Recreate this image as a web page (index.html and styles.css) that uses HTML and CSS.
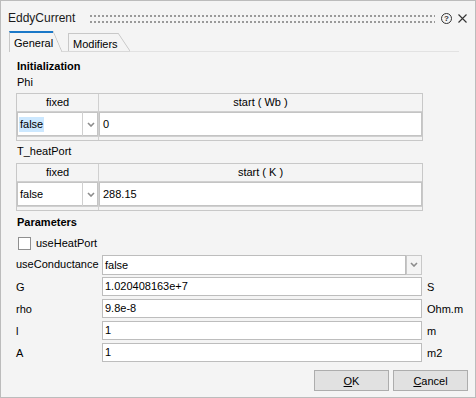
FILE: index.html
```html
<!DOCTYPE html>
<html lang="en">
  <head>
    <meta charset="UTF-8" />
    <title>EddyCurrent</title>
    <link rel="stylesheet" href="styles.css">
  </head>
  <body>
    <div class="dialog">
      <!-- title bar -->
      <div class="titlebar">
        <span class="title">EddyCurrent</span>
        <span class="grip"></span>
        <span class="help">?</span>
        <svg class="close" width="9" height="9" viewBox="0 0 9 9">
          <path d="M0.5 0.5 L8.5 8.5 M8.5 0.5 L0.5 8.5" stroke="#333" stroke-width="1.1" fill="none" />
        </svg>
      </div>

      <!-- tabs -->
      <div class="tabbar">
        <div class="tab active">
          <span class="tab-label">General</span>
          <span class="tab-slant"></span>
        </div>
        <div class="tab-gap"></div>
        <div class="tab">
          <span class="tab-label">Modifiers</span>
          <span class="tab-slant"></span>
        </div>
        <div class="tab-rest"></div>
      </div>

      <div class="pane">
        <div class="group-title">Initialization</div>

        <div class="var-label first">Phi</div>
        <div class="init-table">
          <div class="th">fixed</div>
          <div class="th">start ( Wb )</div>
          <div class="td combo-cell">
            <span class="combo-text"><span class="sel">false</span></span>
            <span class="cell-btn">
              <svg width="8" height="5" viewBox="0 0 8 5"><path d="M1 1 L4 4 L7 1" stroke="#8c8c8c" stroke-width="1.6" fill="none" /></svg>
            </span>
          </div>
          <div class="td value-cell">0</div>
          <div class="tf"></div>
          <div class="tf"></div>
        </div>

        <div class="var-label second">T_heatPort</div>
        <div class="init-table">
          <div class="th">fixed</div>
          <div class="th">start ( K )</div>
          <div class="td combo-cell">
            <span class="combo-text">false</span>
            <span class="cell-btn">
              <svg width="8" height="5" viewBox="0 0 8 5"><path d="M1 1 L4 4 L7 1" stroke="#8c8c8c" stroke-width="1.6" fill="none" /></svg>
            </span>
          </div>
          <div class="td value-cell">288.15</div>
          <div class="tf"></div>
          <div class="tf"></div>
        </div>

        <div class="group-title params">Parameters</div>

        <div class="check-row">
          <span class="checkbox"></span>
          <span>useHeatPort</span>
        </div>

        <div class="param-grid">
          <span class="param-label">useConductance</span>
          <div class="combo">
            <span class="combo-field">false</span>
            <span class="combo-btn">
              <svg width="8" height="5" viewBox="0 0 8 5"><path d="M1 1 L4 4 L7 1" stroke="#8c8c8c" stroke-width="1.6" fill="none" /></svg>
            </span>
          </div>
          <span></span>

          <span class="param-label">G</span>
          <div class="field">1.020408163e+7</div>
          <span class="unit">S</span>

          <span class="param-label">rho</span>
          <div class="field">9.8e-8</div>
          <span class="unit">Ohm.m</span>

          <span class="param-label">l</span>
          <div class="field">1</div>
          <span class="unit">m</span>

          <span class="param-label">A</span>
          <div class="field">1</div>
          <span class="unit">m2</span>
        </div>
      </div>

      <div class="buttons">
        <button class="btn"><u>O</u>K</button>
        <button class="btn"><u>C</u>ancel</button>
      </div>
    </div>
  </body>
</html>
```

FILE: styles.css
```css
* {
  margin: 0;
  padding: 0;
  box-sizing: border-box;
}

body {
  font-family: "Liberation Sans", Arial, sans-serif;
  font-size: 11px;
  color: #000;
  background-color: #f4f4f4;
}

.dialog {
  width: 476px;
  height: 398px;
  border: 1px solid #bcbcbc;
  background-color: #f4f4f4;
}

/* title bar */
.titlebar {
  height: 30px;
  display: flex;
  align-items: flex-start;
  padding: 9px 8px 0 7px;
}

.title {
  font-size: 12px;
  line-height: 16px;
  color: #1a1a1a;
}

.grip {
  flex: 1;
  height: 8px;
  margin: 5px 6px 0 15px;
  background:
    linear-gradient(to right, #9a9a9a 50%, transparent 50%) 0 0 / 4px 2px repeat-x,
    linear-gradient(to right, #9a9a9a 50%, transparent 50%) 0 6px / 4px 2px repeat-x;
}

.help {
  width: 11px;
  height: 11px;
  margin-top: 3px;
  border: 1px solid #333;
  border-radius: 50%;
  font-size: 8px;
  font-weight: bold;
  line-height: 9px;
  text-align: center;
  color: #333;
}

.close {
  margin: 4px 0 0 6px;
}

/* tabs */
.tabbar {
  height: 21px;
  display: flex;
  align-items: flex-end;
  padding-left: 8px;
}

.tab {
  display: flex;
  height: 19px;
  border-bottom: 1px solid #d9d9d9;
}

.tab.active {
  height: 21px;
  border-bottom: none;
}

.tab-label {
  width: 50px;
  padding: 3px 0 0 4px;
  line-height: 14px;
  border-left: 1px solid #c8c8c8;
  border-top: 1px solid #c8c8c8;
}

.tab.active .tab-label {
  width: 44px;
  border-top: 2px solid #1a78c8;
}

.tab-slant {
  width: 12px;
  background: linear-gradient(to top right, transparent calc(50% - 0.8px), #c8c8c8 50%, transparent calc(50% + 0.8px));
}

.tab.active .tab-slant {
  width: 9px;
}

.tab-gap {
  width: 6px;
  height: 1px;
  background-color: #d9d9d9;
}

.tab-rest {
  flex: 1;
  height: 1px;
  margin-right: 16px;
  background-color: #e2e2e2;
}

/* general pane */
.pane {
  padding: 7px 0 0 15px;
}

.group-title {
  margin-left: 1px;
  font-weight: bold;
  line-height: 14px;
}

.group-title.params {
  margin-top: 4px;
}

.var-label {
  margin-left: 1px;
  line-height: 14px;
}

.var-label.first {
  margin-top: 2px;
}

.var-label.second {
  margin-top: 3px;
}

.init-table {
  width: 407px;
  margin-top: 4px;
  display: grid;
  grid-template-columns: 81px 1fr;
  grid-template-rows: 17px 24px 3px;
  gap: 1px;
  border: 1px solid #c8c8c8;
  background-color: #d0d0d0;
}

.var-label.second + .init-table {
  margin-top: 5px;
}

.th {
  background-color: #f4f4f4;
  text-align: center;
  line-height: 17px;
}

.td {
  background-color: #fff;
  box-shadow: inset 0 0 0 1px #c4c4c4;
  line-height: 24px;
}

.tf {
  background-color: #f4f4f4;
}

.combo-cell {
  display: flex;
}

.combo-text {
  flex: 1;
  padding-left: 3px;
}

.sel {
  display: inline-block;
  line-height: 15px;
  padding: 0 1px;
  margin-left: -1px;
  background-color: #cce8ff;
}

.cell-btn {
  width: 16px;
  display: flex;
  align-items: center;
  justify-content: center;
  border-left: 1px solid #d0d0d0;
}

.value-cell {
  padding-left: 4px;
}

/* parameters */
.check-row {
  margin-top: 7px;
  margin-left: 2px;
  display: flex;
  align-items: center;
  gap: 5px;
  line-height: 14px;
}

.checkbox {
  width: 13px;
  height: 13px;
  border: 1px solid #8f8f8f;
  background-color: #fff;
}

.param-grid {
  margin-top: 4px;
  display: grid;
  grid-template-columns: 86px 320px auto;
  grid-template-rows: 20px 19px 19px 19px 19px;
  row-gap: 3px;
  align-items: center;
}

.param-grid > .combo {
  margin-bottom: -1px;
}

.param-label {
  line-height: 14px;
}

.combo {
  display: flex;
  height: 20px;
}

.combo-field {
  flex: 1;
  padding-left: 2px;
  line-height: 18px;
  border: 1px solid #bdbdbd;
  background-color: #fff;
}

.combo-btn {
  width: 16px;
  display: flex;
  align-items: center;
  justify-content: center;
  border: 1px solid #c8c8c8;
  background-color: #f4f4f4;
}

.field {
  height: 19px;
  padding-left: 2px;
  line-height: 17px;
  border: 1px solid #bdbdbd;
  background-color: #fff;
}

.unit {
  padding-left: 5px;
}

/* buttons */
.buttons {
  margin-top: 8px;
  display: flex;
  justify-content: flex-end;
  gap: 4px;
  padding-right: 7px;
}

.btn {
  width: 75px;
  height: 21px;
  font-family: "Liberation Sans", Arial, sans-serif;
  font-size: 11px;
  color: #000;
  background-color: #e1e1e1;
  border: 1px solid #adadad;
}
```
